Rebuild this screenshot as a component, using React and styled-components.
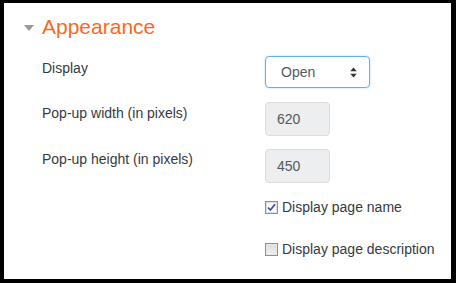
import styled, { createGlobalStyle } from "styled-components"

const Global = createGlobalStyle`
  html, body {
    margin: 0;
    padding: 0;
    background: #000;
  }
`

const Frame = styled.div`
  width: 456px;
  height: 283px;
  box-sizing: border-box;
  border-style: solid;
  border-color: #000;
  border-width: 3px 5px 4px 4px;
  background: #fff;
  font-family: "Liberation Sans", Arial, sans-serif;
  color: #373a3c;
  overflow: hidden;
`

const Legend = styled.div`
  display: flex;
  align-items: center;
  padding: 12px 0 0 20px;
  height: 24px;
`

const Caret = styled.span`
  width: 0;
  height: 0;
  border-left: 5px solid transparent;
  border-right: 5px solid transparent;
  border-top: 6px solid #999;
  margin-right: 8px;
  margin-top: 1px;
`

const Title = styled.h3`
  margin: 0;
  font-size: 21px;
  line-height: 24px;
  font-weight: normal;
  color: #f66a1e;
`

const Rows = styled.div`
  display: flex;
  flex-direction: column;
  padding: 17px 0 0 38px;
`

const Row = styled.div`
  display: grid;
  grid-template-columns: 223px 1fr;
  height: ${p => p.$h}px;
  margin-bottom: ${p => p.$gap}px;
  align-items: ${p => (p.$center ? "center" : "start")};
`

const Label = styled.div`
  font-size: 14px;
  line-height: 16px;
  padding-top: ${p => p.$pt}px;
`

const Select = styled.div`
  width: 105px;
  height: 32px;
  box-sizing: border-box;
  border: 1px solid #66afe9;
  border-radius: 4px;
  box-shadow: 0 0 2px rgba(102, 175, 233, 0.5);
  display: flex;
  align-items: center;
  justify-content: space-between;
  padding: 0 12px 0 15px;
  font-size: 14px;
  color: #55595c;
`

const Input = styled.div`
  width: 65px;
  height: 34px;
  box-sizing: border-box;
  border: 1px solid #dcdcdc;
  border-radius: 4px;
  background: #eceeef;
  display: flex;
  align-items: center;
  padding-left: 11px;
  font-size: 14px;
  color: #55595c;
`

const Check = styled.label`
  grid-column: 2;
  display: flex;
  align-items: center;
  font-size: 14px;
  line-height: 16px;
  color: #373a3c;
`

const Box = styled.span`
  width: 13px;
  height: 13px;
  box-sizing: border-box;
  border: 1px solid #8e8f8f;
  background: ${p =>
    p.$on ? "linear-gradient(#f4f4f4, #ffffff)" : "linear-gradient(#dcdcdc, #f0f0f0)"};
  box-shadow: inset 0 0 0 1px ${p => (p.$on ? "#dedede" : "#e9e9e9")};
  margin-right: 4px;
  display: flex;
  align-items: center;
  justify-content: center;
`

function Arrows() {
  return (
    <svg width="7" height="11" viewBox="0 0 7 11">
      <path d="M3.5 0.5 L6.8 4.3 H0.2 Z" fill="#333" />
      <path d="M3.5 10.5 L6.8 6.7 H0.2 Z" fill="#333" />
    </svg>
  )
}

function Tick() {
  return (
    <svg width="9" height="9" viewBox="0 0 9 9">
      <path d="M1 4.5 L3.4 7 L8 1.2" fill="none" stroke="#3d4f9c" strokeWidth="1.8" />
    </svg>
  )
}

export default function App() {
  return (
    <>
      <Global />
      <Frame>
        <Legend>
          <Caret />
          <Title>Appearance</Title>
        </Legend>
        <Rows>
          <Row $h={32} $gap={14}>
            <Label $pt={4}>Display</Label>
            <Select>
              <span>Open</span>
              <Arrows />
            </Select>
          </Row>
          <Row $h={34} $gap={13}>
            <Label $pt={3}>Pop-up width (in pixels)</Label>
            <Input>620</Input>
          </Row>
          <Row $h={34} $gap={15}>
            <Label $pt={2}>Pop-up height (in pixels)</Label>
            <Input>450</Input>
          </Row>
          <Row $h={18} $gap={24} $center>
            <Check>
              <Box $on>
                <Tick />
              </Box>
              Display page name
            </Check>
          </Row>
          <Row $h={18} $gap={0} $center>
            <Check>
              <Box />
              Display page description
            </Check>
          </Row>
        </Rows>
      </Frame>
    </>
  )
}
